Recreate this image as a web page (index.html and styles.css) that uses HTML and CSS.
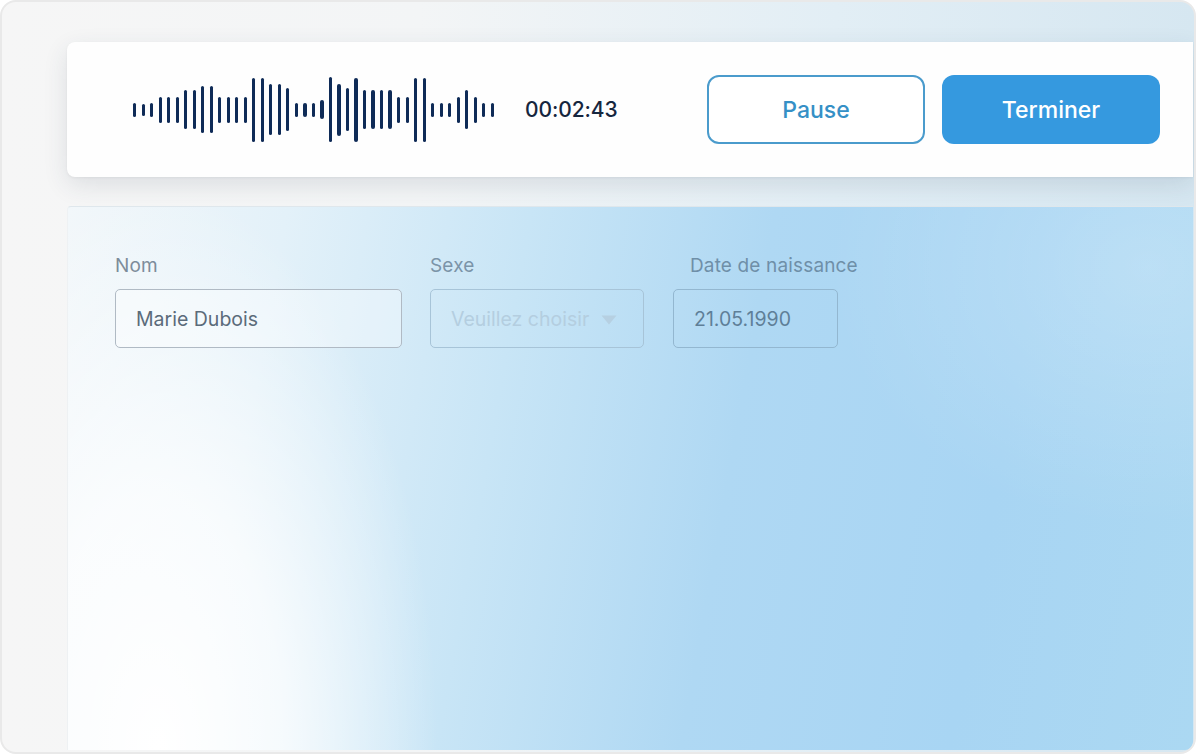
FILE: index.html
```html
<!DOCTYPE html>
<html lang="fr">
<head>
<meta charset="utf-8">
<title>Enregistrement</title>
<link rel="stylesheet" href="styles.css">
</head>
<body>
<div class="frame">
  <div class="recorder">
    <div class="wave">
      <span class="bar" style="height:14px"></span><span class="bar" style="height:12px"></span><span class="bar" style="height:14px"></span><span class="bar" style="height:26px"></span><span class="bar" style="height:26px"></span><span class="bar" style="height:26px"></span><span class="bar" style="height:39px"></span><span class="bar" style="height:39px"></span><span class="bar" style="height:47px"></span><span class="bar" style="height:47px"></span><span class="bar" style="height:26px"></span><span class="bar" style="height:26px"></span><span class="bar" style="height:26px"></span><span class="bar" style="height:26px"></span><span class="bar" style="height:64px"></span><span class="bar" style="height:64px"></span><span class="bar" style="height:51px"></span><span class="bar" style="height:51px"></span><span class="bar" style="height:43px"></span><span class="bar" style="height:14px"></span><span class="bar" style="height:14px"></span><span class="bar" style="height:14px"></span><span class="bar" style="height:19px"></span><span class="bar" style="height:65px"></span><span class="bar" style="height:52px"></span><span class="bar" style="height:43px"></span><span class="bar" style="height:64px"></span><span class="bar" style="height:39px"></span><span class="bar" style="height:39px"></span><span class="bar" style="height:39px"></span><span class="bar" style="height:39px"></span><span class="bar" style="height:26px"></span><span class="bar" style="height:26px"></span><span class="bar" style="height:64px"></span><span class="bar" style="height:64px"></span><span class="bar" style="height:14px"></span><span class="bar" style="height:14px"></span><span class="bar" style="height:14px"></span><span class="bar" style="height:26px"></span><span class="bar" style="height:39px"></span><span class="bar" style="height:26px"></span><span class="bar" style="height:14px"></span><span class="bar" style="height:14px"></span>
    </div>
    <div class="timer">00:02:43</div>
    <div class="actions">
      <button class="btn btn-outline">Pause</button>
      <button class="btn btn-primary">Terminer</button>
    </div>
  </div>
  <div class="panel">
    <div class="form-row">
      <div class="field field-name">
        <label class="label">Nom</label>
        <div class="input">Marie Dubois</div>
      </div>
      <div class="field field-sex">
        <label class="label">Sexe</label>
        <div class="input select">
          <span>Veuillez choisir</span>
          <svg class="caret" width="16" height="10" viewBox="0 0 16 10"><path d="M0.5 0.5 L15.5 0.5 L8 9.5 Z" fill="currentColor"/></svg>
        </div>
      </div>
      <div class="field field-date">
        <label class="label label-date">Date de naissance</label>
        <div class="input date">21.05.1990</div>
      </div>
    </div>
  </div>
</div>
</body>
</html>
```

FILE: styles.css
```css
* { box-sizing: border-box; }
html, body { margin: 0; padding: 0; }
body {
  width: 1196px;
  height: 754px;
  overflow: hidden;
  font-family: "Inter", "Open Sans", sans-serif;
  background: #ffffff;
}
.frame {
  width: 1196px;
  height: 754px;
  border: 2px solid #e9e9e9;
  border-radius: 16px;
  overflow: hidden;
  background: linear-gradient(90deg, #f6f6f6 0%, #f3f5f6 35%, #e2eef5 70%, #d6e7f1 100%);
  padding: 40px 1px 2px 65px;
  display: flex;
  flex-direction: column;
  gap: 29px;
}
.recorder {
  height: 135px;
  flex: none;
  background: #fefefe;
  border-radius: 8px 0 0 8px;
  box-shadow: 0 8px 24px rgba(40, 60, 80, 0.12), 0 1px 3px rgba(0,0,0,0.05);
  display: flex;
  align-items: center;
  padding: 0 33px 0 66px;
}
.wave {
  display: flex;
  align-items: center;
  gap: 5.34px;
  width: 362px;
  height: 70px;
}
.bar {
  display: block;
  width: 3.2px;
  border-radius: 2px;
  background: #0f2b57;
  flex: none;
}
.timer {
  margin-left: 30px;
  font-size: 21px;
  font-weight: 500;
  color: #16263e;
  letter-spacing: -0.1px;
}
.actions {
  margin-left: auto;
  display: flex;
  gap: 17px;
}
.btn {
  width: 218px;
  height: 69px;
  border-radius: 12px;
  font-family: inherit;
  font-size: 23px;
  font-weight: 500;
  cursor: pointer;
}
.btn-outline {
  background: #ffffff;
  border: 2px solid #4a9bcc;
  color: #3590c6;
}
.btn-primary {
  background: #3599df;
  border: none;
  color: #ffffff;
}
.panel {
  flex: 1;
  border-radius: 4px 0 8px 0;
  border-top: 1px solid #dfe7ec;
  border-left: 1px solid #eef1f3;
  background:
    radial-gradient(ellipse 280px 560px at 90px 540px, rgba(255,255,255,1) 0%, rgba(255,255,255,0.75) 45%, rgba(255,255,255,0) 100%),
    radial-gradient(ellipse 320px 260px at 1080px 60px, rgba(255,255,255,0.22) 0%, rgba(255,255,255,0) 100%),
    linear-gradient(100deg, #f2f7fa 0%, #e3f1f9 18%, #c8e5f6 38%, #afd8f3 58%, #a8d5f3 80%, #abd8f2 100%);
  padding: 48px 0 0 47px;
}
.form-row {
  display: flex;
  gap: 28px;
}
.field {
  display: flex;
  flex-direction: column;
  gap: 12px;
}
.label {
  font-size: 19px;
  color: #7d8c9a;
  height: 22px;
  line-height: 22px;
  letter-spacing: 0.15px;
}
.field-sex .label { color: #7b94a8; }
.label-date { padding-left: 17px; color: #6f8fa8; }
.input {
  height: 59px;
  border: 1.5px solid #b0bac4;
  border-radius: 5px;
  font-size: 19.5px;
  display: flex;
  align-items: center;
  padding-left: 20px;
  color: #5b6b7a;
}
.field-name .input { width: 287px; background: rgba(255,255,255,0.35); }
.select {
  width: 214px;
  border-color: #a7c4d8;
  color: #b4cee0;
  gap: 12px;
}
.caret { color: #b6d0e2; margin-top: 2px; }
.field-date { margin-left: 1px; }
.date {
  width: 165px;
  border-color: #93b7d0;
  color: #5f7f98;
}
```
